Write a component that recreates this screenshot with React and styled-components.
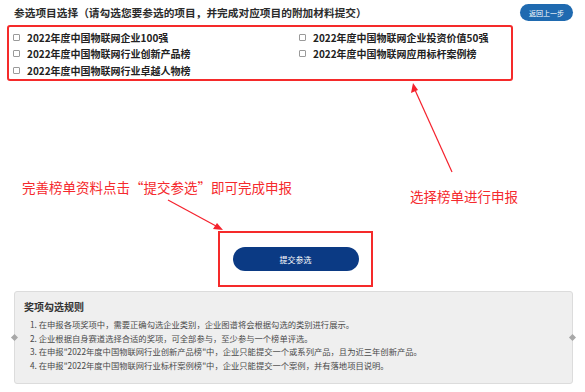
import styled, { createGlobalStyle } from "styled-components";

const GlobalStyle = createGlobalStyle`
  html, body {
    margin: 0;
    padding: 0;
    background: #ffffff;
  }
  body {
    font-family: "Noto Sans CJK SC", "Noto Sans", sans-serif;
    color: #333;
  }
`;

const awards = [
  "2022年度中国物联网企业100强",
  "2022年度中国物联网企业投资价值50强",
  "2022年度中国物联网行业创新产品榜",
  "2022年度中国物联网应用标杆案例榜",
  "2022年度中国物联网行业卓越人物榜",
];

const rules = [
  "1. 在申报各项奖项中，需要正确勾选企业类别，企业图谱将会根据勾选的类别进行展示。",
  "2. 企业根据自身赛道选择合适的奖项，可全部参与，至少参与一个榜单评选。",
  "3. 在申报\"2022年度中国物联网行业创新产品榜\"中，企业只能提交一个或系列产品，且为近三年创新产品。",
  "4. 在申报\"2022年度中国物联网行业标杆案例榜\"中，企业只能提交一个案例，并有落地项目说明。",
];

function App() {
  return (
    <>
      <GlobalStyle />
      <Page>
        {/* Header */}
        <Header>
          <Title>参选项目选择（请勾选您要参选的项目，并完成对应项目的附加材料提交）</Title>
          <BackButton>返回上一步</BackButton>
        </Header>

        {/* Award choices, outlined in red */}
        <ChoiceBox>
          {awards.map((a) => (
            <Choice key={a}>
              <Check />
              <span>{a}</span>
            </Choice>
          ))}
        </ChoiceBox>

        {/* Annotation labels */}
        <NoteRow>
          <Note>完善榜单资料点击“提交参选”即可完成申报</Note>
          <Note $right>选择榜单进行申报</Note>
        </NoteRow>

        {/* Submit */}
        <SubmitFrame>
          <SubmitButton>提交参选</SubmitButton>
        </SubmitFrame>

        {/* Rules */}
        <RulesBox>
          <Handle $side="left" />
          <Handle $side="right" />
          <RulesTitle>奖项勾选规则</RulesTitle>
          <RulesList>
            {rules.map((r) => (
              <li key={r}>{r}</li>
            ))}
          </RulesList>
        </RulesBox>

        {/* Annotation arrows */}
        <Arrows viewBox="0 0 585 392" width="585" height="392">
          <line x1="452" y1="172" x2="415" y2="90" stroke="#f5222d" strokeWidth="1.2" />
          <polygon points="413,83 411,93 418,90" fill="#f5222d" />
          <line x1="168" y1="200" x2="216" y2="226" stroke="#f5222d" strokeWidth="1.2" />
          <polygon points="223,230 213,229 217,223" fill="#f5222d" />
        </Arrows>
      </Page>
    </>
  );
}

const Page = styled.div`
  position: relative;
  width: 585px;
  height: 392px;
  overflow: hidden;
  box-sizing: border-box;
`;

const Header = styled.header`
  display: flex;
  align-items: center;
  justify-content: space-between;
  padding: 4px 12px 0 14px;
  height: 21px;
  box-sizing: border-box;
`;

const Title = styled.h1`
  margin: 0;
  font-size: 10.7px;
  line-height: 17px;
  font-weight: 700;
  color: #2b2b2b;
`;

const BackButton = styled.button`
  width: 53px;
  height: 17px;
  border: 0;
  border-radius: 9px;
  background: #1f6ab0;
  color: #fff;
  font-family: inherit;
  font-size: 7px;
  padding: 0;
`;

const ChoiceBox = styled.div`
  margin: 4px 0 0 7px;
  width: 506px;
  height: 56px;
  box-sizing: border-box;
  border: 2px solid #f52a2a;
  border-radius: 3px;
  padding: 2px 0 0 4px;
  display: grid;
  grid-template-columns: 286px 1fr;
  grid-auto-rows: 16.5px;
`;

const Choice = styled.label`
  display: flex;
  align-items: center;
  gap: 7px;
  font-size: 10px;
  font-weight: 700;
  color: #222;
  white-space: nowrap;
`;

const Check = styled.span`
  width: 7px;
  height: 7px;
  box-sizing: border-box;
  border: 1px solid #9a9a9a;
  border-radius: 1px;
  background: #fff;
`;

const NoteRow = styled.div`
  display: flex;
  align-items: flex-start;
  margin-top: 98px;
  padding: 0 67px 0 22px;
  height: 40px;
`;

const Note = styled.div`
  font-size: 13.5px;
  line-height: 16px;
  color: #f5292d;
  white-space: nowrap;
  ${(p) => p.$right && "margin-left: auto; margin-top: 9px;"}
`;

const SubmitFrame = styled.div`
  margin: 12px 0 0 218px;
  width: 155px;
  height: 56px;
  box-sizing: border-box;
  border: 2px solid #f52a2a;
  display: flex;
  align-items: center;
  justify-content: center;
`;

const SubmitButton = styled.button`
  width: 126px;
  height: 24px;
  border: 0;
  border-radius: 12px;
  background: #0b3a84;
  color: #fff;
  font-family: inherit;
  font-size: 8px;
  padding: 0;
`;

const RulesBox = styled.section`
  position: relative;
  margin: 4px 12px 0 14px;
  height: 93px;
  box-sizing: border-box;
  background: #efefef;
  border: 1px solid #dcdcdc;
  border-radius: 3px;
  padding: 8px 10px 0 9px;
`;

const Handle = styled.span`
  position: absolute;
  top: 50%;
  ${(p) => (p.$side === "left" ? "left: -3px;" : "right: -3px;")}
  width: 5px;
  height: 5px;
  margin-top: -3px;
  background: #a8a8a8;
  transform: rotate(45deg);
`;

const RulesTitle = styled.h2`
  margin: 0;
  font-size: 10px;
  line-height: 14px;
  font-weight: 700;
  color: #333;
`;

const RulesList = styled.ol`
  list-style: none;
  margin: 4px 0 0 6px;
  padding: 0;
  font-size: 8.3px;
  line-height: 13.5px;
  color: #4a4a4a;
  white-space: nowrap;
`;

const Arrows = styled.svg`
  position: absolute;
  left: 0;
  top: 0;
  pointer-events: none;
`;

export default App;
